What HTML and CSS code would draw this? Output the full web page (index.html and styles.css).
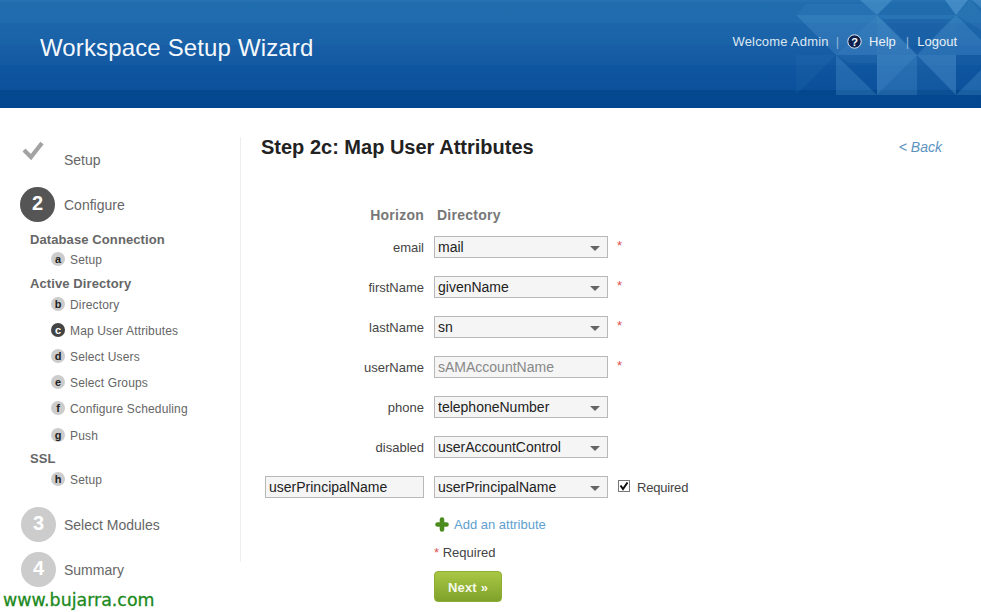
FILE: index.html
```html
<!DOCTYPE html>
<html lang="en">
<head>
<meta charset="utf-8">
<title>Workspace Setup Wizard</title>
<link rel="stylesheet" href="styles.css">
</head>
<body>
<header class="banner">
  <svg class="pattern" width="211" height="95" viewBox="770 0 211 95" aria-hidden="true">
    <g fill="#7cc0f0">
      <polygon points="796,15 806,4 865,4 877,15" opacity=".12"/>
      <polygon points="796,15 877,15 836,55" opacity=".28"/>
      <polygon points="860,0 892,0 877,15" opacity=".45"/>
      <polygon points="877,15 836,55 917,55" opacity=".36"/>
      <polygon points="877,15 917,55 877,55" opacity=".10"/>
      <polygon points="945,0 968,0 956,15" opacity=".55"/>
      <polygon points="877,15 956,15 950,19 883,19" opacity=".16"/>
      <polygon points="956,15 917,55 956,55" opacity=".30"/>
      <polygon points="956,15 981,40 981,55 956,55" opacity=".28"/>
      <polygon points="972,0 981,0 981,8" opacity=".40"/>
      <polygon points="956,15 970,0 981,12 981,30" opacity=".14"/>
      <polygon points="836,55 877,95 836,95" opacity=".30"/>
      <polygon points="836,55 877,55 877,63 850,63" opacity=".12"/>
      <polygon points="877,55 917,55 877,95" opacity=".48"/>
      <polygon points="917,55 917,95 877,95" opacity=".34"/>
      <polygon points="917,55 956,55 956,95" opacity=".42"/>
      <polygon points="917,55 956,95 917,95" opacity=".10"/>
      <polygon points="956,95 981,70 981,95" opacity=".30"/>
      <polygon points="796,55 836,55 796,95" opacity=".08"/>
    </g>
    <g fill="#0a3f86">
      <polygon points="883,19 950,19 917,52" opacity=".10"/>
      <polygon points="796,95 836,55 836,95" opacity=".08"/>
    </g>
  </svg>
  <h1 class="banner-title">Workspace Setup Wizard</h1>
  <nav class="user-nav">
    <span class="welcome">Welcome Admin</span>
    <span class="sep sep-first">|</span>
    <svg class="help-icon" width="15" height="15" viewBox="0 0 15 15" aria-hidden="true"><circle cx="7.5" cy="7.5" r="6.7" fill="#0d1f4c" stroke="#dfe8f2" stroke-width="1"/></svg>
    <span class="help-q">?</span>
    <a class="nav-link" href="#">Help</a>
    <span class="sep sep-second">|</span>
    <a class="nav-link" href="#">Logout</a>
  </nav>
</header>

<div class="content">
  <aside class="sidebar">
    <div class="step">
      <span class="step-mark">
        <svg width="26" height="24" viewBox="0 0 26 24" aria-hidden="true"><polyline points="4,13 11,20 22,6" fill="none" stroke="#a3a3a3" stroke-width="4.2"/></svg>
      </span>
      <span>Setup</span>
    </div>
    <div class="step">
      <span class="step-mark step-num current">2</span>
      <span>Configure</span>
    </div>
    <div class="group">Database Connection</div>
    <div class="sub"><span class="badge">a</span>Setup</div>
    <div class="group group-gap">Active Directory</div>
    <div class="sub sub-tight"><span class="badge">b</span>Directory</div>
    <div class="sub"><span class="badge active">c</span>Map User Attributes</div>
    <div class="sub"><span class="badge">d</span>Select Users</div>
    <div class="sub"><span class="badge">e</span>Select Groups</div>
    <div class="sub"><span class="badge">f</span>Configure Scheduling</div>
    <div class="sub sub-wide"><span class="badge">g</span>Push</div>
    <div class="group group-ssl">SSL</div>
    <div class="sub sub-tight"><span class="badge">h</span>Setup</div>
    <div class="step step-after">
      <span class="step-mark step-num todo">3</span>
      <span>Select Modules</span>
    </div>
    <div class="step">
      <span class="step-mark step-num todo">4</span>
      <span>Summary</span>
    </div>
  </aside>

  <main class="main">
    <div class="title-row">
      <h2 class="page-title">Step 2c: Map User Attributes</h2>
      <a class="back" href="#">&lt; Back</a>
    </div>
    <div class="mapping">
      <div class="col-head col-right">Horizon</div>
      <div class="col-head col-dir">Directory</div>
      <div></div>

      <label class="attr">email</label>
      <div class="select-wrap"><select class="field"><option>mail</option></select></div>
      <span class="req">*</span>

      <label class="attr">firstName</label>
      <div class="select-wrap"><select class="field"><option>givenName</option></select></div>
      <span class="req">*</span>

      <label class="attr">lastName</label>
      <div class="select-wrap"><select class="field"><option>sn</option></select></div>
      <span class="req">*</span>

      <label class="attr">userName</label>
      <input class="field field-off" value="sAMAccountName" disabled>
      <span class="req">*</span>

      <label class="attr">phone</label>
      <div class="select-wrap"><select class="field"><option>telephoneNumber</option></select></div>
      <span></span>

      <label class="attr">disabled</label>
      <div class="select-wrap"><select class="field"><option>userAccountControl</option></select></div>
      <span></span>

      <input class="field" value="userPrincipalName">
      <div class="select-wrap"><select class="field"><option>userPrincipalName</option></select></div>
      <label class="required-check">
        <span class="check"><svg width="10" height="10" viewBox="0 0 10 10" aria-hidden="true"><polyline points="1.5,4.5 4,8 8.5,1.5" fill="none" stroke="#111" stroke-width="2"/></svg></span>
        Required
      </label>
    </div>
    <div class="below">
      <a class="add" href="#">
        <svg width="14" height="15" viewBox="0 0 14 15" aria-hidden="true"><path d="M7 2.5v10M2.5 7.5h9" stroke="#4c8c1e" stroke-width="4.6" stroke-linecap="round" fill="none"/></svg>
        Add an attribute
      </a>
      <div class="legend"><span class="legend-star">*</span> Required</div>
      <button class="next" type="button">Next »</button>
    </div>
  </main>
</div>
<div class="watermark">www.bujarra.com</div>
</body>
</html>
```

FILE: styles.css
```css
* { box-sizing: border-box; }
html, body { margin: 0; padding: 0; height: 612px; overflow: hidden; }
body { font-family: "Liberation Sans", Arial, sans-serif; background: #fff; color: #555; position: relative; }

.banner {
  position: relative;
  height: 108px;
  display: flex;
  justify-content: space-between;
  padding: 0 24px 0 40px;
  background: linear-gradient(to bottom,
    #2872b2 0, #206dae 3px, #1f6bad 23px,
    #1d66aa 23px, #1a62a8 45px,
    #175ea6 45px, #135aa3 65px,
    #0f56a0 65px, #0b519c 90px,
    #04488f 90px, #034791 108px);
}
.pattern { position: absolute; right: 0; top: 0; opacity: .65; }
.banner-title { position: relative; margin: 33px 0 0; font-size: 24px; line-height: 30px; font-weight: 400; letter-spacing: .14px; color: #f4f8fc; }
.user-nav { position: relative; display: flex; align-items: center; height: 15px; margin-top: 34px; font-size: 13px; color: #dde7f2; }
.welcome { letter-spacing: .2px; }
.nav-link { color: #e8eff7; text-decoration: none; }
.sep { color: #8fb4d6; }
.sep-first { margin: 0 8px 0 7px; }
.sep-second { margin: 0 8px 0 10px; }
.help-icon { display: block; }
.help-q { width: 15px; margin: 0 7px 0 -15px; text-align: center; color: #fff; font-size: 11px; font-weight: 700; }

.content { display: flex; align-items: flex-start; }
.sidebar { flex: none; width: 241px; height: 425px; margin-top: 29px; padding: 0 0 0 20px; border-right: 1px solid #eee; }
.step { display: flex; align-items: center; height: 45px; font-size: 14px; color: #666; }
.step-mark { flex: none; display: flex; align-items: center; justify-content: center; width: 35px; height: 35px; margin-right: 9px; }
.step:first-child .step-mark { margin-top: -21px; justify-content: flex-start; }
.step:first-child .step-mark svg { display: block; }
.step-num { border-radius: 50%; color: #fff; font-size: 20px; font-weight: 700; padding-bottom: 2px; }
.current { background: #555; }
.todo { background: #ccc; margin-left: 1px; margin-right: 8px; }
.step-after { margin-top: 13px; }

.group { height: 20px; padding-top: 1px; margin-left: 10px; font-size: 13px; line-height: 20px; font-weight: 700; color: #666; margin-top: 2px; letter-spacing: .1px; }
.group-gap { margin-top: 4px; }
.group-ssl { margin-top: 3px; }
.sub { display: flex; align-items: center; height: 20px; padding-top: 2px; margin-left: 31px; font-size: 12px; letter-spacing: .15px; color: #666; margin-top: 6px; }
.group + .sub { margin-top: 0; }
.sub-tight, .group + .sub-tight { margin-top: 1px; }
.sub-wide { margin-top: 7px; }
.badge { flex: none; display: flex; align-items: center; justify-content: center; width: 14px; height: 14px; margin: -2px 5px 0 0; border-radius: 50%; background: #ccc; color: #222; font-size: 11px; font-weight: 700; letter-spacing: 0; }
.badge.active { background: #444; color: #fff; }

.main { flex: 1; padding: 26px 39px 0 20px; }
.title-row { display: flex; justify-content: space-between; align-items: center; height: 26px; }
.page-title { margin: 0; font-size: 20px; line-height: 26px; font-weight: 700; color: #222; }
.back { font-size: 14px; font-style: italic; color: #5b93c0; text-decoration: none; }

.mapping { display: grid; grid-template-columns: 159px 174px auto; grid-auto-rows: 22px; column-gap: 10px; row-gap: 18px; margin: 36px 0 0 4px; align-items: center; }
.col-head { font-size: 14px; font-weight: 700; color: #777; margin-top: 16px; letter-spacing: .25px; }
.col-right { text-align: right; }
.col-dir { padding-left: 3px; }
.attr { text-align: right; font-size: 13px; color: #444; }
.field { display: block; width: 100%; height: 22px; padding: 0 3px; border: 1px solid #b8b8b8; border-radius: 0; background: #f5f5f5; color: #222; font: 14px "Liberation Sans", Arial, sans-serif; appearance: none; outline: none; }
.field-off { color: #888; }
.select-wrap { position: relative; }
.select-wrap::after { content: ""; position: absolute; right: 8px; top: 10px; border-style: solid; border-width: 5px 5px 0; border-color: #666 transparent transparent; }
.req { color: #d9534f; font-size: 13px; margin: -4px 0 0 -1px; }
.required-check { display: flex; align-items: center; gap: 7px; font-size: 13px; letter-spacing: -.2px; color: #444; }
.check { display: flex; align-items: center; justify-content: center; width: 12px; height: 12px; border: 1px solid #777; background: #fff; margin-top: -2px; }

.below { margin: 16px 0 0 173px; }
.add { display: flex; align-items: center; gap: 5px; height: 20px; margin-left: 1px; font-size: 13px; color: #5ea0cf; text-decoration: none; }
.legend { height: 20px; margin-top: 9px; font-size: 13px; line-height: 20px; color: #444; }
.legend-star { color: #d9534f; }
.next { display: block; width: 68px; height: 31px; margin-top: 8px; padding: 2px 0 0; border: 1px solid #8eae32; border-radius: 4px; background: linear-gradient(to bottom, #a9c744, #7fa22c); color: #f4f8e8; font: 700 13px "Liberation Sans", Arial, sans-serif; letter-spacing: .2px; }

.watermark { position: absolute; left: 3px; top: 589px; font: 17.4px/22px "DejaVu Sans", sans-serif; color: #1d8a1d; -webkit-text-stroke: .3px #1d8a1d; }
```
